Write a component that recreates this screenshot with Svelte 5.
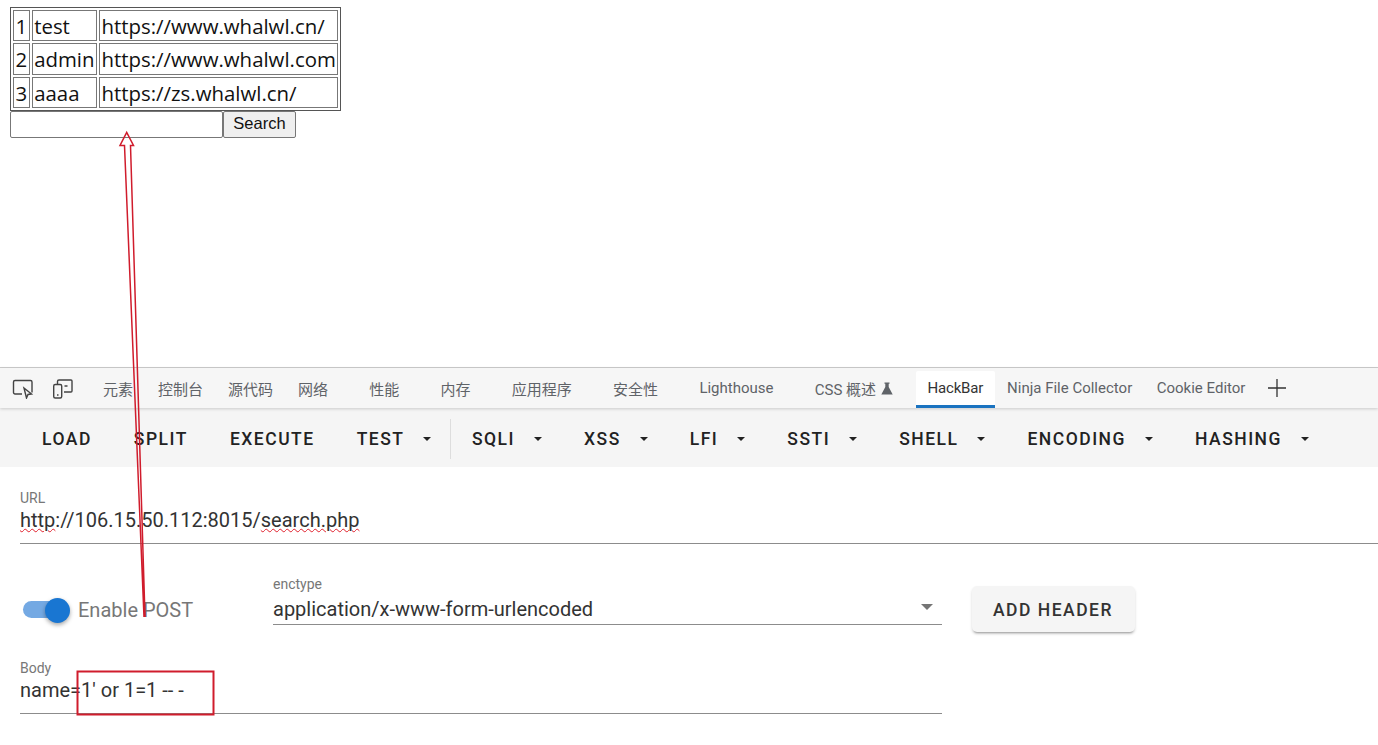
<script>
  const rows = [
    { id: 1, name: 'test', site: 'https://www.whalwl.cn/' },
    { id: 2, name: 'admin', site: 'https://www.whalwl.com' },
    { id: 3, name: 'aaaa', site: 'https://zs.whalwl.cn/' }
  ];

  const tabs = [
    { label: '元素' },
    { label: '控制台' },
    { label: '源代码' },
    { label: '网络', loose: true },
    { label: '性能', loose: true },
    { label: '内存', loose: true },
    { label: '应用程序', loose: true },
    { label: '安全性', loose: true },
    { label: 'Lighthouse', loose: true }
  ];

  const tools = [
    { label: 'LOAD' },
    { label: 'SPLIT' },
    { label: 'EXECUTE' },
    { label: 'TEST', menu: true, divider: true },
    { label: 'SQLI', menu: true },
    { label: 'XSS', menu: true },
    { label: 'LFI', menu: true },
    { label: 'SSTI', menu: true },
    { label: 'SHELL', menu: true },
    { label: 'ENCODING', menu: true },
    { label: 'HASHING', menu: true }
  ];
</script>

<div class="page">
  <table>
    <tbody>
      {#each rows as row}
        <tr>
          <td>{row.id}</td>
          <td>{row.name}</td>
          <td>{row.site}</td>
        </tr>
      {/each}
    </tbody>
  </table>
  <form class="search" on:submit|preventDefault>
    <input type="text" />
    <button type="submit">Search</button>
  </form>
</div>

<div class="devtools">
  <div class="tabbar">
    <svg class="tool-icon" width="22" height="22" viewBox="0 0 22 22" fill="none" stroke="#444" stroke-width="1.4">
      <path d="M10 17H3a1.500 1.500 0 0 1-1.500-1.500V5A1.500 1.500 0 0 1 3 3.500h15.500A1.500 1.500 0 0 1 20 5v10.500" />
      <path d="M12 11l7.500 6-3.500.5-1.500 3.500z" fill="#f6f6f6" />
    </svg>
    <svg class="tool-icon device" width="22" height="22" viewBox="0 0 22 22" fill="none" stroke="#444" stroke-width="1.4">
      <path d="M5.500 7V4.500A1.500 1.500 0 0 1 7 3h12a1 1 0 0 1 1 1v10a1 1 0 0 1-1 1h-7" />
      <rect x="1.700" y="7.500" width="8" height="13.500" rx="1.500" />
      <path d="M5 18h1.500M12.500 9h3" />
    </svg>
    <div class="tabs">
      {#each tabs as tab}
        <span class="tab" class:loose={tab.loose}>{tab.label}</span>
      {/each}
      <span class="tab css">CSS 概述
        <svg width="12" height="13" viewBox="0 0 12 13"><path d="M3.500 .5h5v1.200H7.700v3.300l4 7.500H.3l4-7.500V1.700h-.8z" fill="#5f6368" /></svg>
      </span>
      <span class="tab active">HackBar</span>
      <span class="tab ninja">Ninja File Collector</span>
      <span class="tab">Cookie Editor</span>
      <svg class="plus" width="20" height="20" viewBox="0 0 20 20" stroke="#333" stroke-width="1.300"><path d="M10 1v18M1 10h18" /></svg>
    </div>
  </div>

  <div class="toolbar">
    {#each tools as tool}
      <span class="tool">
        {tool.label}
        {#if tool.menu}<i class="caret"></i>{/if}
      </span>
      {#if tool.divider}<span class="divider"></span>{/if}
    {/each}
  </div>

  <div class="form">
    <div class="field url">
      <label for="url">URL</label>
      <div id="url" class="value"><span class="typo">http</span>://106.15.50.112:8015/<span class="typo">search.php</span></div>
    </div>

    <div class="options">
      <div class="switch">
        <span class="track"></span>
        <span class="knob"></span>
      </div>
      <span class="switch-label">Enable POST</span>
      <div class="field enctype">
        <label for="enctype">enctype</label>
        <div id="enctype" class="value select">
          application/x-www-form-urlencoded
          <i class="select-caret"></i>
        </div>
      </div>
      <span class="add-header">ADD HEADER</span>
    </div>

    <div class="field body">
      <label for="body">Body</label>
      <div id="body" class="value">name=1' or 1=1 -- -</div>
    </div>
  </div>
</div>

<!-- annotation drawn over the screenshot -->
<svg class="annotation" width="1378" height="745" viewBox="0 0 1378 745" fill="none">
  <path d="M145 617 130.500 145.500 133.500 145.500 126.700 132.500 120 145.500 124.500 145.500 144 617" stroke="#d01c2c" stroke-width="1.500" />
  <rect x="77.500" y="671.500" width="136" height="43" stroke="#d01c2c" stroke-width="2" />
</svg>

<style>
  :global(body) {
    margin: 0;
    background: #fff;
    overflow: hidden;
    font-family: Roboto, "Noto Sans CJK SC", sans-serif;
  }

  .page {
    height: 367px;
    padding: 7px 0 0 10px;
    box-sizing: border-box;
    font-family: "Open Sans", "Noto Sans", sans-serif;
  }

  table {
    border: 1px solid #555;
    border-spacing: 2px;
    font-size: 20.400px;
    color: #111;
  }

  td {
    border: 1px solid #777;
    padding: 2px 1.500px 0;
    height: 27.300px;
    line-height: 27.300px;
  }

  .search {
    display: flex;
    align-items: flex-start;
  }

  .search input {
    width: 213px;
    height: 27px;
    margin: 0;
    padding: 0;
    box-sizing: border-box;
    border: 1px solid #777;
    border-radius: 2px;
  }

  .search button {
    width: 73px;
    height: 27px;
    margin: 0;
    padding: 0 0 2px;
    border: 1px solid #777;
    border-radius: 2px;
    background: #efefef;
    font: 16.500px "Liberation Sans", sans-serif;
    color: #111;
  }

  .devtools {
    border-top: 1px solid #ccc;
  }

  .tabbar {
    height: 40px;
    display: flex;
    align-items: center;
    background: #f6f6f6;
    box-shadow: 0 1px 3px rgba(0, 0, 0, 0.18);
    position: relative;
  }

  .tool-icon {
    margin-left: 12px;
    flex: none;
  }

  .tool-icon.device {
    margin-left: 18px;
  }

  .tabs {
    margin-left: 16.500px;
    height: 100%;
    display: flex;
    align-items: center;
    font-size: 15px;
    color: #5f6368;
    white-space: nowrap;
  }

  .tab {
    padding: 0 12.500px;
    height: 100%;
    display: flex;
    align-items: center;
    box-sizing: border-box;
  }

  .tab.loose {
    padding-right: 28.750px;
  }

  .tab.css {
    gap: 5px;
    padding-right: 23px;
  }

  .tab.active {
    padding: 0 11.500px;
    margin-top: 3px;
    height: 37px;
    background: #fff;
    color: #333;
    letter-spacing: -0.2px;
    border-bottom: 3px solid #1a73c0;
    border-radius: 2px 2px 0 0;
  }

  .tab.ninja {
    padding-right: 12px;
  }

  .plus {
    margin-left: 9px;
  }

  .toolbar {
    height: 59px;
    box-sizing: border-box;
    padding: 2px 0 0 21px;
    display: flex;
    align-items: center;
    background: #f5f5f5;
    font-size: 17.500px;
    font-weight: 500;
    letter-spacing: 1.500px;
    color: #222;
    white-space: nowrap;
  }

  .tool {
    padding: 0 21px;
    display: flex;
    align-items: center;
  }

  .caret {
    margin-left: 19px;
    width: 0;
    height: 0;
    border-left: 4.500px solid transparent;
    border-right: 4.500px solid transparent;
    border-top: 4.500px solid #222;
  }

  .divider {
    width: 1px;
    height: 40px;
    margin-left: -2.500px;
    background: #ddd;
  }

  .form {
    padding-left: 20px;
    color: #333;
  }

  label {
    display: block;
    font-size: 14px;
    line-height: 16px;
    color: #777;
    margin: 1px 0 -1px;
  }

  .value {
    font-size: 20px;
    line-height: 30px;
    border-bottom: 1px solid #8c8c8c;
  }

  .typo {
    text-decoration: underline wavy #e0202c 1px;
    text-underline-offset: 1px;
  }

  .url {
    padding-top: 22px;
  }

  .url .value {
    padding-bottom: 8px;
  }

  .options {
    display: flex;
    align-items: flex-start;
    margin-top: 32px;
  }

  .switch {
    position: relative;
    width: 48px;
    height: 24px;
    margin: 22px 0 0 3px;
    flex: none;
  }

  .track {
    position: absolute;
    left: 0;
    top: 3px;
    width: 46px;
    height: 17px;
    border-radius: 9px;
    background: #74a9e3;
  }

  .knob {
    position: absolute;
    left: 22px;
    top: 0;
    width: 25px;
    height: 25px;
    border-radius: 50%;
    background: #1976d2;
    box-shadow: 0 2px 4px rgba(0, 0, 0, 0.35);
  }

  .switch-label {
    margin: 21px 0 0 7px;
    width: 195px;
    flex: none;
    font-size: 20px;
    line-height: 27px;
    color: #777;
  }

  .enctype {
    width: 669px;
    flex: none;
  }

  .enctype label {
    margin: 0;
  }

  .select {
    position: relative;
    padding: 3px 0 0;
    line-height: 29px;
  }

  .select-caret {
    position: absolute;
    right: 9px;
    top: 12px;
    width: 0;
    height: 0;
    border-left: 6.500px solid transparent;
    border-right: 6.500px solid transparent;
    border-top: 6.500px solid #757575;
  }

  .add-header {
    margin: 10px 0 0 29.500px;
    width: 163px;
    height: 46px;
    box-sizing: border-box;
    padding-top: 2px;
    display: flex;
    align-items: center;
    justify-content: center;
    background: #f5f5f5;
    border-radius: 5px;
    box-shadow: 0 3px 2px -2px rgba(0, 0, 0, 0.25), 0 2px 3px rgba(0, 0, 0, 0.16);
    font-size: 17.500px;
    font-weight: 500;
    letter-spacing: 1.500px;
    color: #333;
  }

  .body {
    width: 922px;
    margin-top: 28px;
  }

  .body .value {
    padding-bottom: 8px;
  }

  .annotation {
    position: absolute;
    left: 0;
    top: 0;
    pointer-events: none;
  }
</style>
